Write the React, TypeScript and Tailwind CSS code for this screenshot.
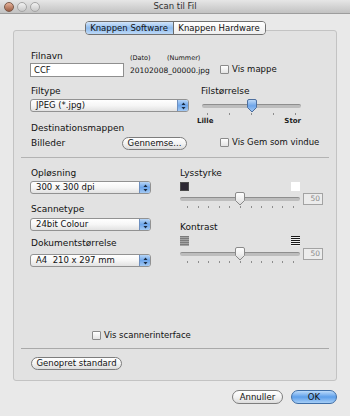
import type { ReactNode } from 'react'

function Label({ children, className = '' }: { children: ReactNode; className?: string }) {
  return <div className={`text-[9px] leading-[11px] text-[#111] whitespace-nowrap ${className}`}>{children}</div>
}

function Checkbox({ label }: { label: string }) {
  return (
    <div className="flex items-center gap-[3px] h-[13px] whitespace-nowrap">
      <span className="w-[9px] h-[9px] shrink-0 rounded-[1px] border border-[#8b8b8b] bg-gradient-to-b from-white to-[#e4e4e4]" />
      <span className="text-[8.5px] leading-[11px] text-[#111]">{label}</span>
    </div>
  )
}

function PopUp({ value, className }: { value: string; className: string }) {
  return (
    <div className={`flex h-[13px] rounded-[3px] border border-[#929292] bg-gradient-to-b from-white via-[#f6f6f6] to-[#e2e2e2] ${className}`}>
      <span className="flex-1 pl-[5px] text-[8.5px] leading-[11px] text-[#111] whitespace-pre">{value}</span>
      <span className="w-[11px] flex items-center justify-center rounded-r-[2px] border-l border-[#6d8fbf] bg-gradient-to-b from-[#b7d5f6] via-[#6ea6ea] to-[#a3c9f3]">
        <svg width="5" height="8" viewBox="0 0 5 8">
          <path d="M2.5 0.5 L4.5 3 H0.5 Z" fill="#1a2a40" />
          <path d="M2.5 7.5 L4.5 5 H0.5 Z" fill="#1a2a40" />
        </svg>
      </span>
    </div>
  )
}

function PushButton({ children, className }: { children: ReactNode; className: string }) {
  return (
    <div className={`flex items-center justify-center rounded-full border border-[#7d7d7d] bg-gradient-to-b from-white via-[#f3f3f3] to-[#dcdcdc] text-[8.5px] leading-[11px] text-[#111] whitespace-nowrap ${className}`}>
      {children}
    </div>
  )
}

function Thumb({ blue }: { blue?: boolean }) {
  return (
    <svg width="12" height="14" viewBox="0 0 12 14">
      <defs>
        <linearGradient id={blue ? 'tb' : 'tg'} x1="0" y1="0" x2="0" y2="1">
          <stop offset="0" stopColor={blue ? '#c4ddf8' : '#ffffff'} />
          <stop offset="0.5" stopColor={blue ? '#6fa6ea' : '#f0f0f0'} />
          <stop offset="1" stopColor={blue ? '#a7cbf3' : '#d6d6d6'} />
        </linearGradient>
      </defs>
      <path
        d="M1.5 2 Q1.5 0.5 3 0.5 H9 Q10.5 0.5 10.5 2 V8.5 L6 13 L1.5 8.5 Z"
        fill={`url(#${blue ? 'tb' : 'tg'})`}
        stroke={blue ? '#4d6f9e' : '#8a8a8a'}
        strokeWidth="1"
      />
    </svg>
  )
}

function Slider({ className, thumbClass, blue }: { className: string; thumbClass: string; blue?: boolean }) {
  return (
    <div className={`relative h-[14px] ${className}`}>
      <div className="absolute left-0 right-0 top-[5px] h-[4px] rounded-full border-t border-[#8e8e8e] bg-[#bdbdbd]" />
      <div className={`absolute top-0 ${thumbClass}`}>
        <Thumb blue={blue} />
      </div>
    </div>
  )
}

function Ticks({ count, className }: { count: number; className: string }) {
  return (
    <div className={`flex justify-between ${className}`}>
      {Array.from({ length: count }).map((_, i) => (
        <span key={i} className="w-px h-[2px] bg-[#8c8c8c]" />
      ))}
    </div>
  )
}

function ValueBox() {
  return (
    <div className="w-[20px] h-[12px] border border-[#a3a3a3] bg-[#ececec] text-right pr-[2px] text-[7.5px] leading-[10px] text-[#8a8a8a]">
      50
    </div>
  )
}

export default function App() {
  return (
    <div className="w-[350px] h-[416px] bg-[#e9e9e9] font-['DejaVu_Sans',sans-serif] flex flex-col overflow-hidden">
      {/* title bar */}
      <div className="h-[14px] grid grid-cols-[1fr_auto_1fr] items-center border-b border-[#9d9d9d] bg-gradient-to-b from-[#e6e6e6] to-[#c2c2c2]">
        <div className="flex gap-[3px] pl-[4px]">
          <span className="w-[10px] h-[10px] rounded-full border border-[#7a5a4a] bg-gradient-to-b from-[#e8b49c] to-[#9c5e44]" />
          <span className="w-[10px] h-[10px] rounded-full border border-[#a5a5a5] bg-gradient-to-b from-[#f2f2f2] to-[#c9c9c9]" />
          <span className="w-[10px] h-[10px] rounded-full border border-[#a5a5a5] bg-gradient-to-b from-[#f2f2f2] to-[#c9c9c9]" />
        </div>
        <div className="text-[8.5px] leading-[11px] text-[#2e2e2e]">Scan til Fil</div>
        <div />
      </div>

      {/* segmented tabs */}
      <div className="relative z-10 mt-[7px] flex justify-center">
        <div className="flex h-[14px] rounded-[4px] border border-[#707070] overflow-hidden text-[8.5px] leading-[12px] text-[#111]">
          <div className="w-[88px] flex items-center justify-center bg-gradient-to-b from-[#d3e6fb] via-[#8fbcee] to-[#bcd8f7] border-r border-[#6a6a6a]">
            Knappen Software
          </div>
          <div className="w-[91px] flex items-center justify-center bg-gradient-to-b from-white to-[#eeeeee]">
            Knappen Hardware
          </div>
        </div>
      </div>

      {/* group box */}
      <div className="mx-[13px] -mt-[5px] h-[351px] rounded-[3px] border border-[#c3c3c3] bg-[#e2e2e2] flex flex-col pt-[20px]">
        {/* file name row */}
        <div className="flex pl-[16px]">
          <div className="w-[100px]">
            <Label className="pl-[1px]">Filnavn</Label>
            <div className="mt-[1px] w-[94px] h-[14px] border border-[#8f8f8f] bg-white pl-[3px] text-[8.5px] leading-[12px] text-[#111]">
              CCF
            </div>
          </div>
          <div className="w-[90px]">
            <div className="mt-[2px] flex text-[6.5px] leading-[10px] text-[#111]">
              <span className="w-[37px]">(Dato)</span>
              <span>(Nummer)</span>
            </div>
            <div className="mt-[2px] text-[7.5px] leading-[12px] text-[#111] whitespace-nowrap">20102008_00000.jpg</div>
          </div>
          <div className="pt-[12px]">
            <Checkbox label="Vis mappe" />
          </div>
        </div>

        {/* type / size row */}
        <div className="flex pl-[16px] mt-[9px]">
          <div className="w-[171px]">
            <Label className="pl-[1px]">Filtype</Label>
            <PopUp value="JPEG (*.jpg)" className="mt-[2px] w-[159px]" />
            <Label className="pl-[1px] mt-[11px]">Destinationsmappen</Label>
            <div className="mt-[3px] flex items-center h-[13px]">
              <Label className="pl-[1px] w-[92px]">Billeder</Label>
              <PushButton className="w-[65px] h-[13px]">Gennemse...</PushButton>
            </div>
          </div>
          <div className="w-[125px]">
            <Label>Filstørrelse</Label>
            <Slider className="mt-[2px] w-[99px] ml-[1px]" thumbClass="left-[44px]" blue />
            <Ticks count={5} className="w-[99px] ml-[1px] px-[5px]" />
            <div className="flex justify-between w-[104px] -ml-[4px] mt-[1px] text-[7px] leading-[10px] font-bold text-[#222]">
              <span>Lille</span>
              <span>Stor</span>
            </div>
            <div className="mt-[10px] pl-[19px]">
              <Checkbox label="Vis Gem som vindue" />
            </div>
          </div>
        </div>

        <div className="mx-[7px] mt-[7px] h-px bg-[#b3b3b3]" />

        {/* scan settings */}
        <div className="flex pl-[16px]">
          <div className="w-[150px]">
            <Label className="pl-[1px] mt-[10px]">Opløsning</Label>
            <PopUp value="300 x 300 dpi" className="mt-[2px] w-[121px]" />
            <Label className="pl-[1px] mt-[10px]">Scannetype</Label>
            <PopUp value="24bit Colour" className="mt-[3px] w-[121px]" />
            <Label className="pl-[1px] mt-[7px]">Dokumentstørrelse</Label>
            <PopUp value="A4  210 x 297 mm" className="mt-[5px] w-[121px]" />
          </div>
          <div className="w-[150px]">
            <Label className="mt-[10px]">Lysstyrke</Label>
            <div className="mt-[3px] w-[120px] flex justify-between">
              <span className="w-[9px] h-[9px] bg-[#2d2833] border border-[#4a4a4a]" />
              <span className="w-[9px] h-[9px] bg-white" />
            </div>
            <div className="mt-[1px] flex items-center gap-[3px]">
              <Slider className="w-[120px]" thumbClass="left-[54px]" />
              <ValueBox />
            </div>
            <Ticks count={11} className="w-[120px] pl-[7px] pr-[6px]" />

            <Label className="mt-[14px]">Kontrast</Label>
            <div className="mt-[3px] w-[120px] flex justify-between">
              <svg width="9" height="10" viewBox="0 0 9 10">
                {[0, 2, 4, 6, 8].map((y) => (
                  <rect key={y} x="0" y={y} width="9" height="1.4" fill="#7c7c7c" />
                ))}
                {[1, 3, 5, 7, 9].map((y) => (
                  <rect key={y} x="0" y={y} width="9" height="1" fill="#a4a4a4" />
                ))}
              </svg>
              <svg width="9" height="10" viewBox="0 0 9 10">
                {[0, 2, 4, 6, 8].map((y) => (
                  <rect key={y} x="0" y={y} width="9" height="1.2" fill="#1a1a1a" />
                ))}
                {[1, 3, 5, 7, 9].map((y) => (
                  <rect key={y} x="0" y={y + 0.2} width="9" height="0.8" fill="#ffffff" />
                ))}
              </svg>
            </div>
            <div className="mt-[1px] flex items-center gap-[3px]">
              <Slider className="w-[120px]" thumbClass="left-[54px]" />
              <ValueBox />
            </div>
            <Ticks count={11} className="w-[120px] pl-[7px] pr-[6px]" />
          </div>
        </div>

        <div className="mt-[62px] pl-[78px]">
          <Checkbox label="Vis scannerinterface" />
        </div>

        <div className="mx-[7px] mt-[6px] h-px bg-[#a9a9a9]" />

        <div className="mt-[8px] pl-[17px]">
          <PushButton className="w-[91px] h-[13px]">Genopret standard</PushButton>
        </div>
      </div>

      {/* dialog buttons */}
      <div className="mt-[9px] flex justify-end gap-[8px] pr-[13px]">
        <PushButton className="w-[51px] h-[14px]">Annuller</PushButton>
        <div className="w-[46px] h-[14px] flex items-center justify-center rounded-full border border-[#3f6ea6] bg-gradient-to-b from-[#bcdbfa] via-[#5d9fea] to-[#a5cdf6] text-[8.5px] leading-[11px] text-[#111]">
          OK
        </div>
      </div>
    </div>
  )
}
